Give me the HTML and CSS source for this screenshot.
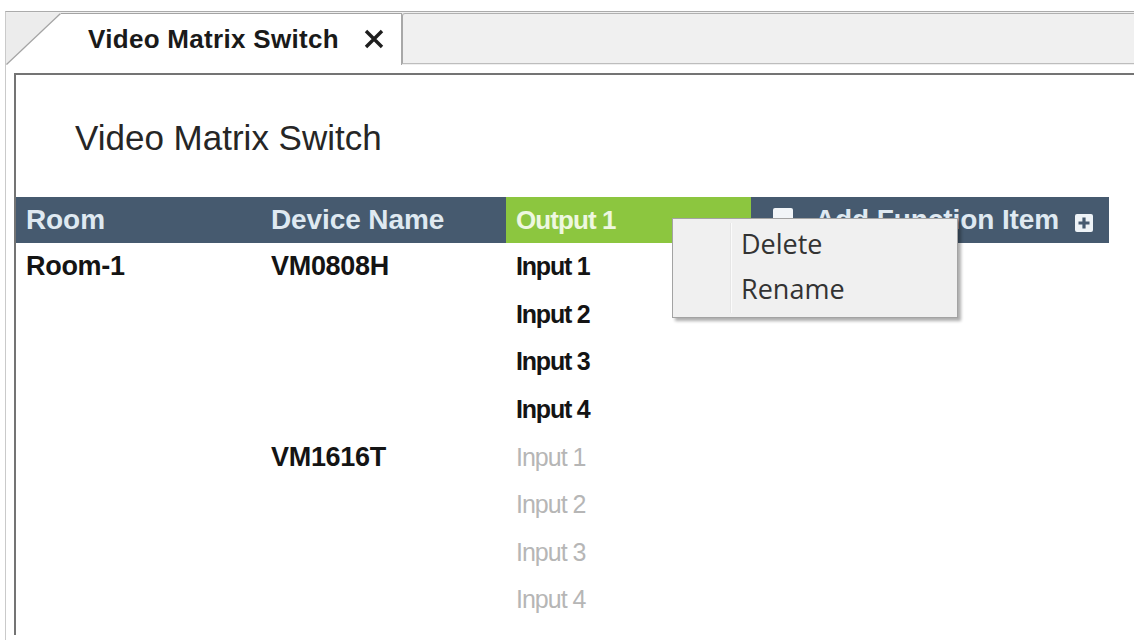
FILE: index.html
```html
<!DOCTYPE html>
<html lang="en">
<head>
<meta charset="utf-8">
<title>Video Matrix Switch</title>
<link rel="stylesheet" href="styles.css">
</head>
<body>
<div class="frame">
  <div class="tabstrip">
    <div class="tab">
      <svg class="tab-slant" width="55" height="52" viewBox="0 0 55 52">
        <polygon points="0,0 55,0 0,52" fill="#ececec"/>
        <line x1="0.5" y1="51.5" x2="54.5" y2="0.5" stroke="#a4a4a4" stroke-width="1.2"/>
      </svg>
      <div class="tab-label">
        <span class="tab-text">Video Matrix Switch</span>
        <svg class="tab-close" width="22" height="20" viewBox="0 0 22 20">
          <path d="M3 2 L19 18 M19 2 L3 18" stroke="#1e1e1e" stroke-width="3.4" stroke-linecap="butt"/>
        </svg>
      </div>
    </div>
    <div class="strip-rest"></div>
  </div>

  <div class="panel">
    <h1 class="title">Video Matrix Switch</h1>

    <div class="matrix">
      <div class="matrix-head">
        <div class="hcell">Room</div>
        <div class="hcell">Device Name</div>
        <div class="hcell hcell-output">Output 1</div>
        <div class="hcell hcell-add">
          <span class="check"></span>
          <span class="add-label">Add Function Item</span>
          <svg class="add-plus" width="18" height="18" viewBox="0 0 18 18">
            <rect x="0" y="0" width="18" height="18" rx="2" fill="#eef3f7"/>
            <path d="M9 3.5 V14.5 M3.5 9 H14.5" stroke="#475b70" stroke-width="3.2"/>
          </svg>
        </div>
      </div>

      <div class="matrix-row">
        <div class="cell">Room-1</div>
        <div class="cell">VM0808H</div>
        <div class="cell cell-input">Input 1</div>
      </div>
      <div class="matrix-row">
        <div class="cell"></div>
        <div class="cell"></div>
        <div class="cell cell-input">Input 2</div>
      </div>
      <div class="matrix-row">
        <div class="cell"></div>
        <div class="cell"></div>
        <div class="cell cell-input">Input 3</div>
      </div>
      <div class="matrix-row">
        <div class="cell"></div>
        <div class="cell"></div>
        <div class="cell cell-input">Input 4</div>
      </div>
      <div class="matrix-row">
        <div class="cell"></div>
        <div class="cell">VM1616T</div>
        <div class="cell cell-input cell-off">Input 1</div>
      </div>
      <div class="matrix-row">
        <div class="cell"></div>
        <div class="cell"></div>
        <div class="cell cell-input cell-off">Input 2</div>
      </div>
      <div class="matrix-row">
        <div class="cell"></div>
        <div class="cell"></div>
        <div class="cell cell-input cell-off">Input 3</div>
      </div>
      <div class="matrix-row">
        <div class="cell"></div>
        <div class="cell"></div>
        <div class="cell cell-input cell-off">Input 4</div>
      </div>
    </div>
  </div>
</div>

<div class="context-menu">
  <div class="menu-item">Delete</div>
  <div class="menu-item">Rename</div>
</div>
</body>
</html>
```

FILE: styles.css
```css
html, body {
  margin: 0;
  padding: 0;
  background: #ffffff;
  overflow: hidden;
}

body {
  width: 1134px;
  height: 640px;
  position: relative;
  font-family: "Liberation Sans", Arial, sans-serif;
}

/* outer window frame */
.frame {
  margin: 11px 0 0 5px;
  height: 629px;
  border-top: 1px solid #ababab;
  border-left: 1px solid #cacaca;
  box-sizing: border-box;
}

/* tab strip */
.tabstrip {
  display: flex;
  height: 53px;
  background: #efefef;
  padding-top: 1px;
  box-sizing: border-box;
}

.tab {
  display: flex;
  width: 396px;
  height: 52px;
}

.tab-slant {
  display: block;
  flex: none;
  background: #ffffff;
}

.tab-label {
  flex: 1;
  display: flex;
  align-items: center;
  background: #ffffff;
  border-top: 1px solid #a4a4a4;
  border-right: 1px solid #a8a8a8;
  padding-left: 27px;
  box-sizing: border-box;
}

.tab-text {
  font-weight: bold;
  font-size: 26px;
  color: #1a1a1a;
  letter-spacing: 0.3px;
}

.tab-close {
  margin-left: 24px;
  margin-top: -2px;
}

.strip-rest {
  flex: 1;
  height: 51px;
  background: #f0f0f0;
  border-top: 1px solid #b0b0b0;
  border-left: 1px solid #a8a8a8;
  border-bottom: 1px solid #bdbdbd;
  border-top-left-radius: 3px;
  box-sizing: border-box;
}

/* content panel */
.panel {
  margin: 8px 0 0 8px;
  height: 560px;
  border-top: 2px solid #747474;
  border-left: 2px solid #747474;
}

.title {
  margin: 0;
  padding: 43px 0 0 59px;
  font-weight: normal;
  font-size: 35px;
  line-height: 40px;
  color: #262626;
}

/* matrix table */
.matrix {
  margin-top: 39px;
  width: 1093px;
}

.matrix-head,
.matrix-row {
  display: grid;
  grid-template-columns: 245px 245px 245px 1fr;
}

.matrix-head {
  height: 46px;
  background: #465a6f;
}

.hcell {
  display: flex;
  align-items: center;
  padding-left: 10px;
  font-weight: bold;
  font-size: 28px;
  color: #dfe9f1;
  letter-spacing: -0.1px;
}

.hcell-output {
  background: #8cc63f;
  color: #eef7e0;
  font-size: 26px;
  letter-spacing: -0.9px;
}

.hcell-add {
  padding-left: 22px;
  padding-right: 16px;
}

.check {
  flex: none;
  width: 20px;
  height: 20px;
  border-radius: 2px;
  background: #f2f5f8;
  margin-right: 22px;
  margin-top: -4px;
}

.add-plus {
  flex: none;
  margin-left: auto;
  margin-top: 5px;
}

.matrix-row {
  height: 47.6px;
}

.cell {
  display: flex;
  align-items: center;
  padding-left: 10px;
  font-weight: bold;
  font-size: 27px;
  color: #141414;
  letter-spacing: -0.3px;
}

.cell-input {
  font-size: 25px;
  letter-spacing: -1.2px;
}

.cell-off {
  font-weight: normal;
  color: #b6b6b6;
  font-size: 25px;
  letter-spacing: -1px;
}

/* right-click menu over the header */
.context-menu {
  position: absolute;
  left: 672px;
  top: 218px;
  width: 286px;
  height: 100px;
  box-sizing: border-box;
  background: #f0f0f0;
  border: 1px solid #a3a3a3;
  box-shadow: 3px 3px 3px rgba(0, 0, 0, 0.32);
  padding-top: 2px;
}

.context-menu::before {
  content: "";
  position: absolute;
  left: 57px;
  top: 4px;
  bottom: 4px;
  width: 1px;
  background: #e6e6e6;
  border-right: 1px solid #fbfbfb;
}

.menu-item {
  height: 45px;
  line-height: 45px;
  padding-left: 68px;
  font-family: "Open Sans", "Noto Sans", sans-serif;
  font-size: 27px;
  color: #333333;
}
```
